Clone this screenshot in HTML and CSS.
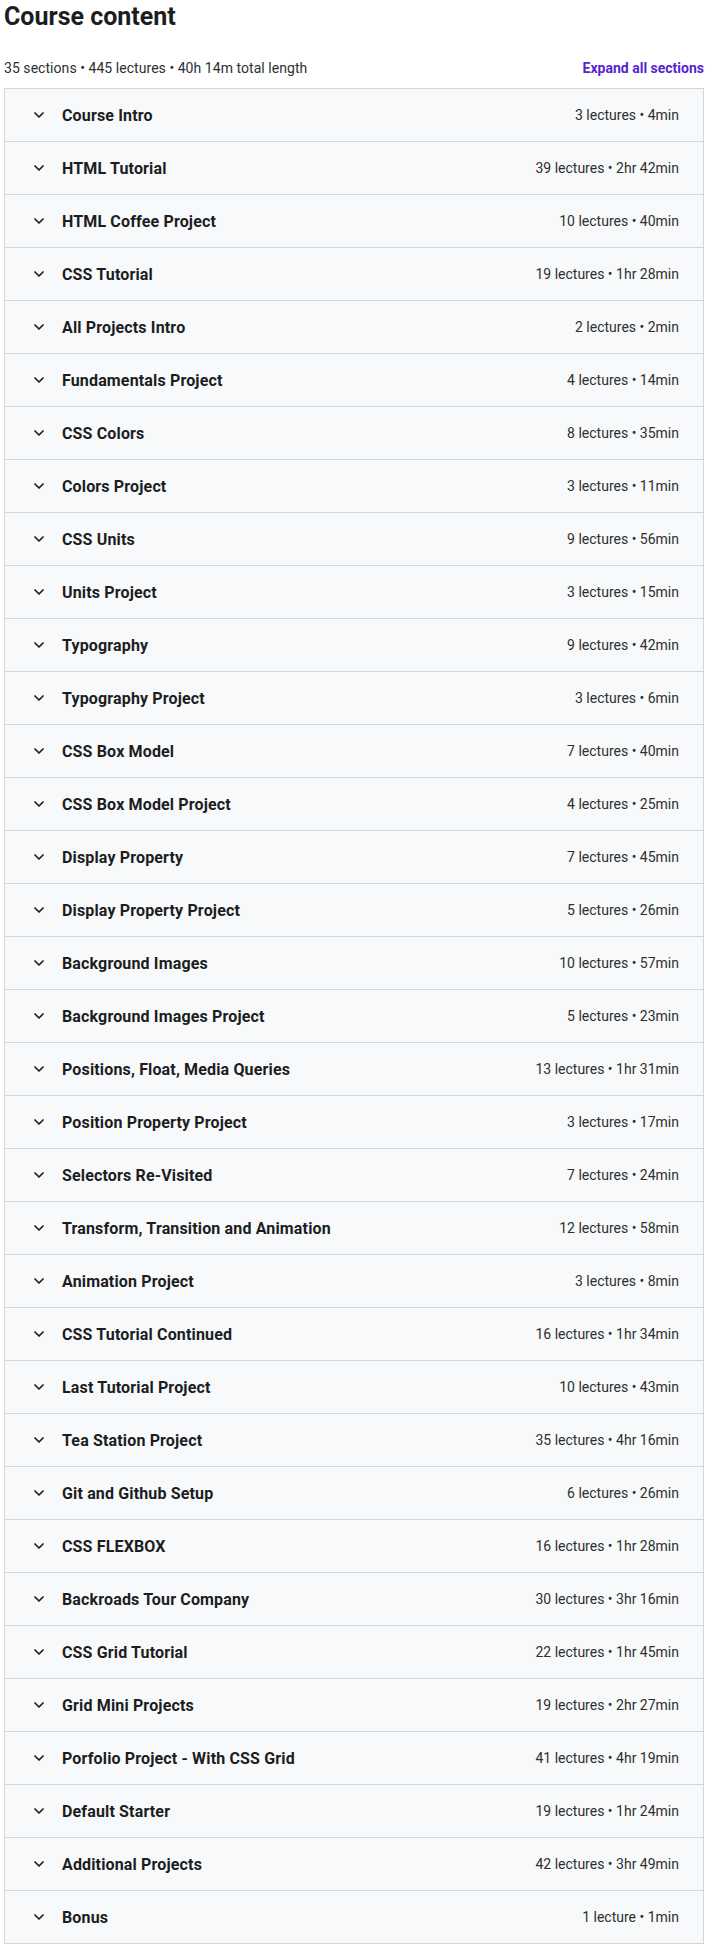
FILE: index.html
```html
<!DOCTYPE html>
<html>
<head>
<meta charset="utf-8">
<link rel="stylesheet" href="styles.css">
</head>
<body>
<div class="page">
  <h2 class="title">Course content</h2>
  <div class="meta">
    <span class="summary">35 sections • 445 lectures • 40h 14m total length</span>
    <span class="expand">Expand all sections</span>
  </div>
  <div class="panel">
    <div class="row"><span class="chev"><svg viewBox="0 0 10 6"><path d="M1 1l4 4 4-4"/></svg></span><span class="name">Course Intro</span><span class="info">3 lectures • 4min</span></div>
    <div class="row"><span class="chev"><svg viewBox="0 0 10 6"><path d="M1 1l4 4 4-4"/></svg></span><span class="name">HTML Tutorial</span><span class="info">39 lectures • 2hr 42min</span></div>
    <div class="row"><span class="chev"><svg viewBox="0 0 10 6"><path d="M1 1l4 4 4-4"/></svg></span><span class="name">HTML Coffee Project</span><span class="info">10 lectures • 40min</span></div>
    <div class="row"><span class="chev"><svg viewBox="0 0 10 6"><path d="M1 1l4 4 4-4"/></svg></span><span class="name">CSS Tutorial</span><span class="info">19 lectures • 1hr 28min</span></div>
    <div class="row"><span class="chev"><svg viewBox="0 0 10 6"><path d="M1 1l4 4 4-4"/></svg></span><span class="name">All Projects Intro</span><span class="info">2 lectures • 2min</span></div>
    <div class="row"><span class="chev"><svg viewBox="0 0 10 6"><path d="M1 1l4 4 4-4"/></svg></span><span class="name">Fundamentals Project</span><span class="info">4 lectures • 14min</span></div>
    <div class="row"><span class="chev"><svg viewBox="0 0 10 6"><path d="M1 1l4 4 4-4"/></svg></span><span class="name">CSS Colors</span><span class="info">8 lectures • 35min</span></div>
    <div class="row"><span class="chev"><svg viewBox="0 0 10 6"><path d="M1 1l4 4 4-4"/></svg></span><span class="name">Colors Project</span><span class="info">3 lectures • 11min</span></div>
    <div class="row"><span class="chev"><svg viewBox="0 0 10 6"><path d="M1 1l4 4 4-4"/></svg></span><span class="name">CSS Units</span><span class="info">9 lectures • 56min</span></div>
    <div class="row"><span class="chev"><svg viewBox="0 0 10 6"><path d="M1 1l4 4 4-4"/></svg></span><span class="name">Units Project</span><span class="info">3 lectures • 15min</span></div>
    <div class="row"><span class="chev"><svg viewBox="0 0 10 6"><path d="M1 1l4 4 4-4"/></svg></span><span class="name">Typography</span><span class="info">9 lectures • 42min</span></div>
    <div class="row"><span class="chev"><svg viewBox="0 0 10 6"><path d="M1 1l4 4 4-4"/></svg></span><span class="name">Typography Project</span><span class="info">3 lectures • 6min</span></div>
    <div class="row"><span class="chev"><svg viewBox="0 0 10 6"><path d="M1 1l4 4 4-4"/></svg></span><span class="name">CSS Box Model</span><span class="info">7 lectures • 40min</span></div>
    <div class="row"><span class="chev"><svg viewBox="0 0 10 6"><path d="M1 1l4 4 4-4"/></svg></span><span class="name">CSS Box Model Project</span><span class="info">4 lectures • 25min</span></div>
    <div class="row"><span class="chev"><svg viewBox="0 0 10 6"><path d="M1 1l4 4 4-4"/></svg></span><span class="name">Display Property</span><span class="info">7 lectures • 45min</span></div>
    <div class="row"><span class="chev"><svg viewBox="0 0 10 6"><path d="M1 1l4 4 4-4"/></svg></span><span class="name">Display Property Project</span><span class="info">5 lectures • 26min</span></div>
    <div class="row"><span class="chev"><svg viewBox="0 0 10 6"><path d="M1 1l4 4 4-4"/></svg></span><span class="name">Background Images</span><span class="info">10 lectures • 57min</span></div>
    <div class="row"><span class="chev"><svg viewBox="0 0 10 6"><path d="M1 1l4 4 4-4"/></svg></span><span class="name">Background Images Project</span><span class="info">5 lectures • 23min</span></div>
    <div class="row"><span class="chev"><svg viewBox="0 0 10 6"><path d="M1 1l4 4 4-4"/></svg></span><span class="name">Positions, Float, Media Queries</span><span class="info">13 lectures • 1hr 31min</span></div>
    <div class="row"><span class="chev"><svg viewBox="0 0 10 6"><path d="M1 1l4 4 4-4"/></svg></span><span class="name">Position Property Project</span><span class="info">3 lectures • 17min</span></div>
    <div class="row"><span class="chev"><svg viewBox="0 0 10 6"><path d="M1 1l4 4 4-4"/></svg></span><span class="name">Selectors Re-Visited</span><span class="info">7 lectures • 24min</span></div>
    <div class="row"><span class="chev"><svg viewBox="0 0 10 6"><path d="M1 1l4 4 4-4"/></svg></span><span class="name">Transform, Transition and Animation</span><span class="info">12 lectures • 58min</span></div>
    <div class="row"><span class="chev"><svg viewBox="0 0 10 6"><path d="M1 1l4 4 4-4"/></svg></span><span class="name">Animation Project</span><span class="info">3 lectures • 8min</span></div>
    <div class="row"><span class="chev"><svg viewBox="0 0 10 6"><path d="M1 1l4 4 4-4"/></svg></span><span class="name">CSS Tutorial Continued</span><span class="info">16 lectures • 1hr 34min</span></div>
    <div class="row"><span class="chev"><svg viewBox="0 0 10 6"><path d="M1 1l4 4 4-4"/></svg></span><span class="name">Last Tutorial Project</span><span class="info">10 lectures • 43min</span></div>
    <div class="row"><span class="chev"><svg viewBox="0 0 10 6"><path d="M1 1l4 4 4-4"/></svg></span><span class="name">Tea Station Project</span><span class="info">35 lectures • 4hr 16min</span></div>
    <div class="row"><span class="chev"><svg viewBox="0 0 10 6"><path d="M1 1l4 4 4-4"/></svg></span><span class="name">Git and Github Setup</span><span class="info">6 lectures • 26min</span></div>
    <div class="row"><span class="chev"><svg viewBox="0 0 10 6"><path d="M1 1l4 4 4-4"/></svg></span><span class="name">CSS FLEXBOX</span><span class="info">16 lectures • 1hr 28min</span></div>
    <div class="row"><span class="chev"><svg viewBox="0 0 10 6"><path d="M1 1l4 4 4-4"/></svg></span><span class="name">Backroads Tour Company</span><span class="info">30 lectures • 3hr 16min</span></div>
    <div class="row"><span class="chev"><svg viewBox="0 0 10 6"><path d="M1 1l4 4 4-4"/></svg></span><span class="name">CSS Grid Tutorial</span><span class="info">22 lectures • 1hr 45min</span></div>
    <div class="row"><span class="chev"><svg viewBox="0 0 10 6"><path d="M1 1l4 4 4-4"/></svg></span><span class="name">Grid Mini Projects</span><span class="info">19 lectures • 2hr 27min</span></div>
    <div class="row"><span class="chev"><svg viewBox="0 0 10 6"><path d="M1 1l4 4 4-4"/></svg></span><span class="name">Porfolio Project - With CSS Grid</span><span class="info">41 lectures • 4hr 19min</span></div>
    <div class="row"><span class="chev"><svg viewBox="0 0 10 6"><path d="M1 1l4 4 4-4"/></svg></span><span class="name">Default Starter</span><span class="info">19 lectures • 1hr 24min</span></div>
    <div class="row"><span class="chev"><svg viewBox="0 0 10 6"><path d="M1 1l4 4 4-4"/></svg></span><span class="name">Additional Projects</span><span class="info">42 lectures • 3hr 49min</span></div>
    <div class="row"><span class="chev"><svg viewBox="0 0 10 6"><path d="M1 1l4 4 4-4"/></svg></span><span class="name">Bonus</span><span class="info">1 lecture • 1min</span></div>
  </div>
</div>
</body>
</html>
```

FILE: styles.css
```css
html, body {
  margin: 0;
  padding: 0;
  background: #ffffff;
}
.page {
  padding: 0 4px 6px 4px;
  font-family: "Roboto", "Liberation Sans", sans-serif;
  color: #2d2f31;
}
.title {
  margin: 0;
  padding-top: 1px;
  height: 37px;
  box-sizing: border-box;
  font-size: 25px;
  line-height: 32px;
  font-weight: 700;
  color: #1c1d1f;
}
.meta {
  display: flex;
  justify-content: space-between;
  align-items: flex-end;
  height: 51px;
  box-sizing: border-box;
  padding-bottom: 10px;
}
.summary {
  font-size: 14px;
  line-height: 20px;
  color: #2d2f31;
  letter-spacing: 0.05px;
}
.expand {
  font-size: 14px;
  line-height: 20px;
  font-weight: 700;
  color: #5624d0;
}
.panel {
  border: 1px solid #d1d7dc;
  border-top: none;
}
.row {
  display: flex;
  align-items: center;
  height: 53px;
  box-sizing: border-box;
  border-top: 1px solid #d1d7dc;
  background: #f7f9fa;
  padding: 0 24px 0 29px;
}
.chev {
  width: 10px;
  height: 6px;
  display: flex;
  margin-right: 18px;
}
.chev svg {
  width: 10px;
  height: 6px;
  fill: none;
  stroke: #1c1d1f;
  stroke-width: 1.7;
  stroke-linecap: round;
  stroke-linejoin: round;
}
.name {
  flex: 1;
  font-size: 16px;
  font-weight: 700;
  color: #1c1d1f;
  letter-spacing: 0.15px;
}
.info {
  font-size: 14px;
  color: #2d2f31;
}
```
